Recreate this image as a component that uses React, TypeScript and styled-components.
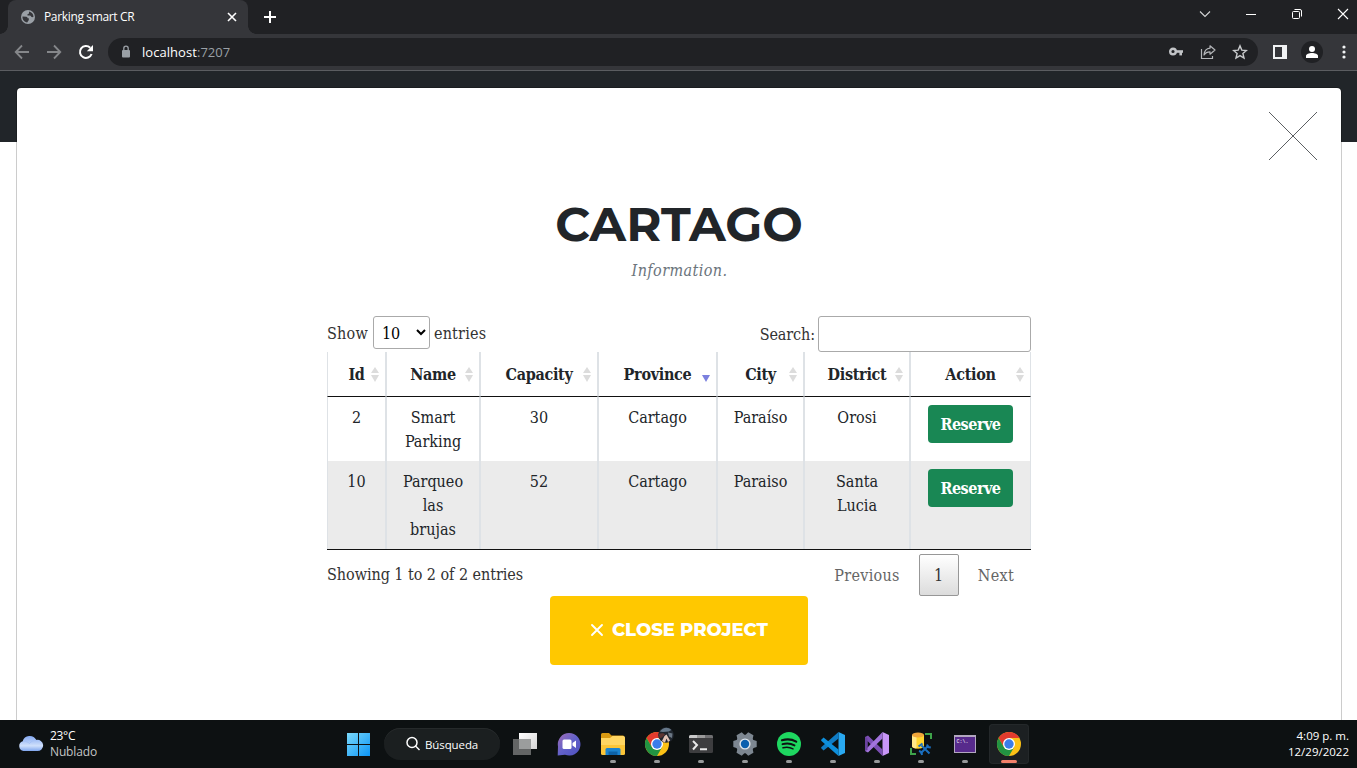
import React from "react";
import styled, { createGlobalStyle } from "styled-components";

const slab = `"Roboto Slab", "DejaVu Serif Condensed", "DejaVu Serif", serif`;
const display = `Montserrat, Inter, "Open Sans", sans-serif`;
const ui = `"Segoe UI", "Open Sans", "Noto Sans", sans-serif`;

const GlobalStyle = createGlobalStyle`
  *, *::before, *::after { box-sizing: border-box; }
  body { margin: 0; background: #fff; overflow: hidden; }
  svg { display: block; flex: none; }
`;

const Screen = styled.div`
  display: flex;
  flex-direction: column;
  width: 1357px;
  height: 768px;
  overflow: hidden;
`;

/* Browser chrome */
const TabStrip = styled.div`
  display: flex;
  align-items: stretch;
  height: 34px;
  padding-left: 8px;
  background: #202124;
`;

const Tab = styled.div`
  position: relative;
  display: flex;
  align-items: center;
  width: 240px;
  padding: 0 10px 0 13px;
  border-radius: 8px 8px 0 0;
  background: #35363a;
  &::before, &::after {
    content: "";
    position: absolute;
    bottom: 0;
    width: 8px;
    height: 8px;
  }
  &::before { left: -8px; background: radial-gradient(circle at 0 0, transparent 7.5px, #35363a 8px); }
  &::after { right: -8px; background: radial-gradient(circle at 100% 0, transparent 7.5px, #35363a 8px); }
`;

const TabTitle = styled.span`
  flex: 1;
  margin-left: 9px;
  color: #fff;
  font: 12px/16px ${ui};
  letter-spacing: -0.35px;
`;

const NewTab = styled.div`
  display: flex;
  align-items: center;
  margin-left: 16px;
`;

const WindowControls = styled.div`
  display: flex;
  align-items: center;
  margin-left: auto;
  height: 28px;
`;

const ControlButton = styled.div`
  display: flex;
  justify-content: center;
  width: 46px;
  &:last-child { margin-right: -9px; }
`;

const Toolbar = styled.div`
  display: flex;
  align-items: center;
  height: 37px;
  padding: 0 11px 0 14px;
  border-bottom: 1px solid #5b5d61;
  background: #35363a;
`;

const NavButtons = styled.div`
  display: flex;
  gap: 16px;
  margin-right: 14px;
`;

const AddressBar = styled.div`
  display: flex;
  align-items: center;
  flex: 1;
  height: 28px;
  padding: 0 10px 0 12px;
  border-radius: 14px;
  background: #202124;
`;

const Url = styled.div`
  flex: 1;
  margin-left: 10px;
  color: #fff;
  font: 13px/18px ${ui};
  letter-spacing: 0.05px;
  span { color: #9aa0a6; }
`;

const AddressActions = styled.div`
  display: flex;
  gap: 16px;
`;

const Avatar = styled.div`
  display: flex;
  align-items: center;
  justify-content: center;
  width: 22px;
  height: 22px;
  margin: 0 19px 0 14px;
  border-radius: 50%;
  background: #202124;
`;

const PanelIcon = styled.div`
  width: 14px;
  height: 14px;
  margin-left: 15px;
  border: 2px solid #f1f3f4;
  border-right-width: 5px;
`;

/* Web page */
const Page = styled.main`
  flex: 1;
  min-height: 0;
  padding: 16px 15px 0 16px;
  overflow: hidden;
  background: linear-gradient(#212529 71px, #fff 71px);
`;

const Modal = styled.section`
  display: flex;
  flex-direction: column;
  align-items: center;
  height: 700px;
  border: 1px solid rgba(0, 0, 0, 0.2);
  border-radius: 5px;
  background: #fff;
  background-clip: padding-box;
`;

const ModalHeader = styled.div`
  display: flex;
  justify-content: flex-end;
  width: 100%;
  height: 106px;
  padding: 24px 24px 0 0;
`;

const Title = styled.h2`
  margin: 0;
  color: #212529;
  font: 700 48px/60px ${display};
  text-transform: uppercase;
`;

const Subtitle = styled.p`
  margin: 5px 0 0;
  height: 57px;
  padding-left: 1px;
  color: #6c757d;
  font: italic 16px/24px ${slab};
  letter-spacing: 0.4px;
`;

const TableWrap = styled.div`
  display: flex;
  flex-direction: column;
  width: 704px;
  color: #333;
  font: 16px/24px ${slab};
`;

const Controls = styled.div`
  display: flex;
  align-items: flex-start;
  justify-content: space-between;
  height: 36px;
`;

const Label = styled.label`
  display: flex;
  align-items: center;
  gap: 4px;
  letter-spacing: 0.2px;
  span { padding-top: 3px; }
`;

const SearchLabel = styled(Label)`
  gap: 3px;
  letter-spacing: -0.1px;
  span { padding-top: 2px; }
`;

const PageSize = styled.select`
  width: 57px;
  height: 33px;
  margin-left: 1px;
  padding: 5px 4px 3px;
  border: 1px solid #aaa;
  border-radius: 3px;
  background: transparent;
  color: #000;
  font: inherit;
`;

const SearchInput = styled.input`
  width: 213px;
  height: 36px;
  padding: 5px;
  border: 1px solid #aaa;
  border-radius: 3px;
  background: transparent;
  font: inherit;
`;

const Table = styled.table`
  width: 704px;
  table-layout: fixed;
  border-collapse: separate;
  border-spacing: 0;
  border-bottom: 1px solid #111;
  color: #212529;
  text-align: center;
`;

const HeadCell = styled.th`
  position: relative;
  height: 45px;
  padding: 11px 0 9px;
  border: solid #dee2e6;
  border-width: 0 1px 1px;
  border-bottom-color: #111;
  font-weight: 700;
  letter-spacing: -0.3px;
`;

const SortMark = styled.span<{ $active?: boolean }>`
  position: absolute;
  top: 15px;
  right: 6px;
  display: flex;
  flex-direction: column;
  gap: 2px;
  &::before, &::after {
    content: "";
    border: solid transparent;
    border-width: 0 4px;
  }
  &::before { border-bottom: 6px solid ${(p) => (p.$active ? "transparent" : "#dcdcdc")}; }
  &::after { border-top: 7px solid ${(p) => (p.$active ? "#7b80de" : "#dcdcdc")}; }
`;

const Row = styled.tr<{ $striped?: boolean }>`
  background: ${(p) => (p.$striped ? "#ebebeb" : "#fff")};
`;

const Cell = styled.td`
  padding: 9px 14px 7px;
  border: solid #dee2e6;
  border-width: 0 1px;
  vertical-align: top;
`;

const ReserveButton = styled.button`
  display: block;
  width: 85px;
  height: 38px;
  margin: -1px auto 0;
  padding: 2px 0 0;
  border: 0;
  border-radius: 4px;
  background: #198754;
  color: #fff;
  font: 700 16px/24px ${slab};
  letter-spacing: -0.5px;
`;

const Footer = styled.div`
  display: flex;
  justify-content: space-between;
  height: 46px;
  padding-top: 4px;
`;

const Info = styled.div`
  padding-top: 9px;
  letter-spacing: -0.05px;
`;

const Pager = styled.div`
  display: flex;
  align-items: flex-start;
`;

const PageLink = styled.div<{ $current?: boolean }>`
  width: ${(p) => (p.$current ? "40px" : "auto")};
  height: 42px;
  padding: ${(p) => (p.$current ? "9px 0" : "9px 16px")};
  margin-left: 2px;
  border: 1px solid ${(p) => (p.$current ? "#979797" : "transparent")};
  border-radius: 2px;
  background: ${(p) => (p.$current ? "linear-gradient(#fff, #dcdcdc)" : "transparent")};
  color: ${(p) => (p.$current ? "#333" : "#666")};
  text-align: center;
  letter-spacing: 0.3px;
`;

const CloseButton = styled.button`
  display: flex;
  align-items: center;
  justify-content: center;
  gap: 8px;
  width: 258px;
  height: 69px;
  padding: 0 0 2px;
  border: 0;
  border-radius: 4px;
  background: #ffc800;
  color: #fff;
  font: 800 18px/24px ${display};
  text-transform: uppercase;
`;

/* Taskbar */
const Taskbar = styled.footer`
  display: grid;
  grid-template-columns: 336px 1fr auto;
  height: 48px;
  background: #0d1112;
  color: #fff;
  font-family: ${ui};
`;

const Weather = styled.div`
  display: flex;
  align-items: center;
  gap: 6px;
  padding-left: 18px;
  font-size: 12px;
  line-height: 16px;
  span { display: block; letter-spacing: -0.3px; }
  span + span { color: #c4c6c6; letter-spacing: -0.15px; }
`;

const Apps = styled.div`
  display: flex;
  align-items: center;
`;

const AppTile = styled.div<{ $active?: boolean }>`
  display: flex;
  align-items: center;
  justify-content: center;
  position: relative;
  width: 40px;
  height: 40px;
  margin: 0 2px;
  border-radius: 4px;
  background: ${(p) => (p.$active ? "#1c2022" : "transparent")};
  box-shadow: ${(p) => (p.$active ? "inset 0 0 0 1px #24282a" : "none")};
`;

const RunMark = styled.i<{ $active?: boolean }>`
  position: absolute;
  bottom: 1px;
  left: 50%;
  width: ${(p) => (p.$active ? 16 : 6)}px;
  height: 3px;
  border-radius: 2px;
  transform: translateX(-50%);
  background: ${(p) => (p.$active ? "#f2806a" : "#96999a")};
`;

const SearchPill = styled.div`
  display: flex;
  align-items: center;
  gap: 4px;
  width: 116px;
  height: 32px;
  margin: 0 3px 0 4px;
  padding-left: 21px;
  border-radius: 16px;
  background: #1b1f20;
  box-shadow: inset 0 1px #262a2b;
  font-size: 11.5px;
  letter-spacing: -0.1px;
`;

const Clock = styled.div`
  padding: 8px 8px 0 0;
  font-size: 11.5px;
  line-height: 16px;
  text-align: right;
`;

const Globe = () => (
  <svg width="14" height="14" viewBox="0 0 14 14">
    <circle cx="7" cy="7" r="7" fill="#9aa0a6" />
    <path d="M8 1.500c2.600.6 4.400 2.600 4.500 5.200-.8.600-1.600.6-2.300 0-.3-1-1-1.200-2-1.200H6.500V4.300L8 3.600zM1.500 6.500l3.800.3c.9.1 1.300.7 1.300 1.500h1.200v1.600L6.200 12.500C3.300 12 1.300 9.800 1.500 6.500z" fill="#35363a" />
  </svg>
);

const Lock = () => (
  <svg width="12" height="14" viewBox="0 0 12 14">
    <rect x="2" y="5" width="8" height="7.500" rx="1" fill="#9aa0a6" />
    <path d="M3.800 5.500V3.400a2.200 2.200 0 0 1 4.400 0v2.100" fill="none" stroke="#9aa0a6" strokeWidth="1.300" />
  </svg>
);

const Back = () => (
  <svg width="16" height="16" viewBox="0 0 16 16" fill="none" stroke="#85878a" strokeWidth="1.800">
    <path d="M15 8H2M8 1.500 1.700 8 8 14.500" />
  </svg>
);

const Forward = () => (
  <svg width="16" height="16" viewBox="0 0 16 16" fill="none" stroke="#85878a" strokeWidth="1.800">
    <path d="M1 8h13M8 1.500 14.300 8 8 14.500" />
  </svg>
);

const Reload = () => (
  <svg width="16" height="16" viewBox="0 0 16 16">
    <path d="M13.600 10a6 6 0 1 1-1.400-6.300" fill="none" stroke="#fff" strokeWidth="2" />
    <path d="M15 1v6.200H8.800z" fill="#fff" />
  </svg>
);

const Key = () => (
  <svg width="16" height="16" viewBox="0 0 16 16" fill="none" stroke="#c2c4c7">
    <circle cx="5" cy="7.500" r="2.800" strokeWidth="2.400" />
    <path d="M8 7.500h7" strokeWidth="2.600" />
    <path d="M12.700 8v3.400" strokeWidth="2.600" />
  </svg>
);

const Share = () => (
  <svg width="16" height="16" viewBox="0 0 16 16" fill="none" stroke="#b4b6b9" strokeWidth="1.200">
    <path d="M1.500 5v9.500h11V12" />
    <path d="M10 1.800 15 6l-5 4.200V7.800C7 7.800 5.300 8.800 4 11c.3-3.800 2.500-6.400 6-6.800z" strokeLinejoin="round" />
  </svg>
);

const Star = () => (
  <svg width="16" height="16" viewBox="0 0 16 16" fill="none" stroke="#c8cacc" strokeWidth="1.400">
    <path d="m8 1.900 1.800 4.200 4.600.4-3.500 3 1.100 4.500L8 11.600 4 14l1.100-4.500-3.500-3 4.600-.4z" />
  </svg>
);

const ChromeLogo = ({ badge }: { badge?: boolean }) => (
  <svg width="28" height="28" viewBox="0 0 28 28" overflow="visible">
    <circle cx="14" cy="14" r="12" fill="#fbc116" />
    <path d="M14 8h10.400A12 12 0 0 0 3.600 8l5.200 9z" fill="#e33b2e" />
    <path d="M3.600 8A12 12 0 0 0 14 26l5.200-9-5.200 3-5.200-3z" fill="#229342" />
    <circle cx="14" cy="14" r="6" fill="#fff" />
    <circle cx="14" cy="14" r="4.700" fill="#3b7de9" />
    {badge && (
      <g>
        <circle cx="23" cy="5" r="7.800" fill="#20262e" />
        <path d="M16.800 1.500c3-4.500 8.500-5 11.500-1.500l-2.500 1.500-6 .5z" fill="#66788a" />
        <path d="M16 4c2-1 5-1 6 .5l-3 3-2.500 1z" fill="#5d3430" />
        <path d="m25 2.500 4.500 1-.5 4.500-3-1.500z" fill="#6b7784" />
        <path d="m19 11 2.500-5 2-1.500 3.500 6-2 1.500-1.500-3.500-1.500 4z" fill="#e3c3b6" />
      </g>
    )}
  </svg>
);

const WindowsLogo = () => (
  <svg width="24" height="24" viewBox="0 0 24 24">
    <defs>
      <linearGradient id="win" x1="0" y1="0" x2="24" y2="24" gradientUnits="userSpaceOnUse">
        <stop stopColor="#7fdcfb" />
        <stop offset="1" stopColor="#0c95f6" />
      </linearGradient>
    </defs>
    <path d="M1 1h11v11H1zM13 1h11v11H13zM1 13h11v11H1zM13 13h11v11H13z" fill="url(#win)" />
  </svg>
);

const TaskView = () => (
  <svg width="24" height="24" viewBox="0 0 24 24">
    <defs>
      <linearGradient id="tv" x1="0" y1="0" x2="1" y2="1">
        <stop stopColor="#fff" />
        <stop offset="1" stopColor="#d4d4d4" />
      </linearGradient>
    </defs>
    <path d="M6 1h18v16H6z" fill="url(#tv)" />
    <path d="M0 7h18v16H0z" fill="#636565" />
    <path d="M6 7h12v10H6z" fill="#9b9d9d" />
  </svg>
);

const Chat = () => (
  <svg width="24" height="24" viewBox="0 0 24 24">
    <defs>
      <linearGradient id="chat" x1="0" y1="0" x2="1" y2="1">
        <stop stopColor="#a06db5" />
        <stop offset=".5" stopColor="#6261c9" />
        <stop offset="1" stopColor="#4d50bf" />
      </linearGradient>
    </defs>
    <path d="M12 1a11.300 11.300 0 1 1-4 21.800L.7 23.500l.3-9A11.300 11.300 0 0 1 12 1z" fill="url(#chat)" />
    <rect x="5.500" y="7.500" width="9" height="9.500" rx="1.500" fill="#fff" />
    <path d="m15.500 11 3.500-2.500v7.500l-3.500-2.500z" fill="#fff" />
  </svg>
);

const Folder = () => (
  <svg width="24" height="24" viewBox="0 0 24 24">
    <path d="M0 2.500A1.500 1.500 0 0 1 1.500 1H8l2.500 2.500H22.500V9H0z" fill="#d99a12" />
    <path d="M0 6h9l2.500-2H22.500A1.500 1.500 0 0 1 24 5.500V22H0z" fill="#ffd662" />
    <path d="M0 13h24v8.500a1.500 1.500 0 0 1-1.500 1.500h-21A1.500 1.500 0 0 1 0 21.500z" fill="#fbc537" />
    <path d="M4.500 23v-5.500A1.500 1.500 0 0 1 6 16h12a1.500 1.500 0 0 1 1.500 1.500V23z" fill="#1a83cf" />
    <path d="M7.500 23v-3.500h9V23z" fill="#0c62a8" />
  </svg>
);

const Terminal = () => (
  <svg width="24" height="20" viewBox="0 0 24 20">
    <rect y="1" width="24" height="18" rx="1.500" fill="#3d3d3f" />
    <path d="M0 4V2.500A1.500 1.500 0 0 1 1.500 1H8v3z" fill="#c9c9c9" />
    <path d="M8 1h8v3H8z" fill="#9a9a9a" />
    <path d="M16 1h6.500A1.500 1.500 0 0 1 24 2.500V4h-8z" fill="#707072" />
    <path d="m4 7 4 4-4 4.500M11 15.200h7" fill="none" stroke="#e9e9e9" strokeWidth="2" />
  </svg>
);

const Gear = () => (
  <svg width="24" height="24" viewBox="0 0 24 24">
    <g fill="#7d8791">
      <circle cx="12" cy="12" r="9.300" />
      {[30, 90, 150, 210, 270, 330].map((a) => (
        <path key={a} d="M7.500 5 9 .300h6L16.500 5z" transform={`rotate(${a} 12 12)`} />
      ))}
    </g>
    <circle cx="12" cy="12" r="5.600" fill="#dfe5ea" />
    <circle cx="12" cy="12" r="4.200" fill="#0c60ae" />
  </svg>
);

const Spotify = () => (
  <svg width="24" height="24" viewBox="0 0 24 24">
    <circle cx="12" cy="12" r="12" fill="#1ed760" />
    <g fill="none" stroke="#0d1112" strokeLinecap="round">
      <path d="M5 8.300c5-1.400 10-1 14.200 1.300" strokeWidth="2.200" />
      <path d="M5.500 12.200c4.200-1.200 8.400-.8 12 1.200" strokeWidth="1.900" />
      <path d="M6 15.800c3.500-.9 6.900-.6 10 1.100" strokeWidth="1.500" />
    </g>
  </svg>
);

const VsCode = () => (
  <svg width="24" height="24" viewBox="0 0 24 24">
    <path d="M17.500 0 24 3v18l-6.500 3z" fill="#29a9f1" />
    <path d="M17.500 0v6.500L2.600 18.400.2 16.300v-1z" fill="#0f7cc5" />
    <path d="M17.500 24v-6.500L2.600 5.600.2 7.700v1z" fill="#0d8fdc" />
  </svg>
);

const VisualStudio = () => (
  <svg width="24" height="24" viewBox="0 0 24 24">
    <path d="M17.500 0 24 3v18l-6.500 3z" fill="#c896f7" />
    <path d="M0 5 3 3.500l14.500 14V24L2.500 9v6.500L0 18z" fill="#7b4fb4" />
    <path d="M17.500 0v6.500L3 20.500 0 19v-2l2.500-1.500z" fill="#a274dc" />
    <path d="M0 5 2.500 6v12L0 19z" fill="#6b43a0" />
  </svg>
);

const DataStudio = () => (
  <svg width="24" height="24" viewBox="0 0 24 24">
    <path d="M16 2h6v5M2 16v6h5" fill="none" stroke="#3ea34a" strokeWidth="2" />
    <path d="M3 3v11c0 3.500 12 3.500 12 0V3z" fill="#ffd52e" />
    <path d="M3 3v11c0 1.500 2 2.300 4.500 2.500V3z" fill="#ffe989" />
    <ellipse cx="9" cy="3" rx="6" ry="2.500" fill="#f0a63a" />
    <g stroke="#1a6fc0" fill="none" strokeWidth="2">
      <path d="m11.500 21.500 8-8M12.500 13.500l8 8" />
      <path d="m9.500 14.500 4-3M18 12.500l1 2.500 2.800.5M10 19l2.500 1 .5 3" />
    </g>
  </svg>
);

const Prompt = () => (
  <svg width="22" height="18" viewBox="0 0 22 18">
    <rect width="22" height="18" fill="#b2a7bf" />
    <rect x="1" y="2" width="20" height="15" fill="#572a8c" />
    <text x="2.500" y="8" fill="#fff" fontSize="5" fontFamily="Liberation Mono, monospace">C:\.</text>
  </svg>
);

const Cloud = () => (
  <svg width="26" height="18" viewBox="0 0 26 18">
    <defs>
      <linearGradient id="cloud" x1="0" y1="0" x2="0" y2="1">
        <stop stopColor="#85aaf2" />
        <stop offset=".65" stopColor="#cfe0fb" />
        <stop offset="1" stopColor="#7fa6ee" />
      </linearGradient>
    </defs>
    <path d="M5.500 16a5 5 0 0 1-.8-9.700A7.300 7.300 0 0 1 18.200 5 5.600 5.600 0 1 1 19 16z" fill="url(#cloud)" />
    <path d="M5 6.200c3-.2 5 .8 6.500 2.300 1.500-2 4-3.500 6.700-3.500" fill="none" stroke="#a6c2f6" />
  </svg>
);

const apps = [Folder, () => <ChromeLogo badge />, Terminal, Gear, Spotify, VsCode, VisualStudio, DataStudio, Prompt];

const columns = [
  { name: "Id", width: 59 },
  { name: "Name", width: 94 },
  { name: "Capacity", width: 118 },
  { name: "Province", width: 119 },
  { name: "City", width: 87 },
  { name: "District", width: 106 },
  { name: "Action", width: 121 },
];

const lots = [
  ["2", "Smart Parking", "30", "Cartago", "Paraíso", "Orosi"],
  ["10", "Parqueo las brujas", "52", "Cartago", "Paraiso", "Santa Lucia"],
];

export default function App() {
  return (
    <Screen>
      <GlobalStyle />
      <TabStrip>
        <Tab>
          <Globe />
          <TabTitle>Parking smart CR</TabTitle>
          <svg width="12" height="12" viewBox="0 0 12 12" stroke="#fff" strokeWidth="1.600">
            <path d="m2 2 8 8M10 2l-8 8" />
          </svg>
        </Tab>
        <NewTab>
          <svg width="12" height="12" viewBox="0 0 12 12" stroke="#fff" strokeWidth="2">
            <path d="M6 0v12M0 6h12" />
          </svg>
        </NewTab>
        <WindowControls>
          <ControlButton>
            <svg width="12" height="12" viewBox="0 0 12 12" fill="none" stroke="#d5d6d7" strokeWidth="1.100">
              <path d="m1 3.500 5 5 5-5" />
            </svg>
          </ControlButton>
          <ControlButton>
            <svg width="10" height="12" viewBox="0 0 10 12" stroke="#fff">
              <path d="M0 6.500h10" />
            </svg>
          </ControlButton>
          <ControlButton>
            <svg width="12" height="12" viewBox="0 0 12 12" fill="none" stroke="#fff">
              <rect x="1.500" y="3.500" width="7" height="7" rx="1" />
              <path d="M3.500 1.500H9a1.500 1.500 0 0 1 1.500 1.500v5.500" />
            </svg>
          </ControlButton>
          <ControlButton>
            <svg width="12" height="12" viewBox="0 0 12 12" stroke="#fff" strokeWidth="1.100">
              <path d="m1 1 10 10M11 1 1 11" />
            </svg>
          </ControlButton>
        </WindowControls>
      </TabStrip>
      <Toolbar>
        <NavButtons>
          <Back />
          <Forward />
          <Reload />
        </NavButtons>
        <AddressBar>
          <Lock />
          <Url>
            localhost<span>:7207</span>
          </Url>
          <AddressActions>
            <Key />
            <Share />
            <Star />
          </AddressActions>
        </AddressBar>
        <PanelIcon />
        <Avatar>
          <svg width="12" height="12" viewBox="0 0 12 12" fill="#fff">
            <circle cx="6" cy="3" r="3" />
            <path d="M0 12v-2c0-2 3-3 6-3s6 1 6 3v2z" />
          </svg>
        </Avatar>
        <svg width="4" height="14" viewBox="0 0 4 14" fill="#f1f3f4">
          <circle cx="2" cy="2" r="1.600" />
          <circle cx="2" cy="7" r="1.600" />
          <circle cx="2" cy="12" r="1.600" />
        </svg>
      </Toolbar>

      <Page>
        <Modal>
          <ModalHeader>
            <svg width="48" height="48" viewBox="0 0 48 48" stroke="#4a4d50" strokeWidth="0.900">
              <path d="m0 0 48 48M48 0 0 48" />
            </svg>
          </ModalHeader>
          <Title>Cartago</Title>
          <Subtitle>Information.</Subtitle>
          <TableWrap>
            <Controls>
              <Label>
                <span>Show</span>
                <PageSize defaultValue="10">
                  <option>10</option>
                </PageSize>
                <span>entries</span>
              </Label>
              <SearchLabel>
                <span>Search:</span>
                <SearchInput />
              </SearchLabel>
            </Controls>
            <Table>
              <colgroup>
                {columns.map((c) => (
                  <col key={c.name} width={c.width} />
                ))}
              </colgroup>
              <thead>
                <tr>
                  {columns.map((c) => (
                    <HeadCell key={c.name}>
                      {c.name}
                      <SortMark $active={c.name === "Province"} />
                    </HeadCell>
                  ))}
                </tr>
              </thead>
              <tbody>
                {lots.map((lot, i) => (
                  <Row key={lot[0]} $striped={i % 2 === 1}>
                    {lot.map((value, j) => (
                      <Cell key={j}>{value}</Cell>
                    ))}
                    <Cell>
                      <ReserveButton>Reserve</ReserveButton>
                    </Cell>
                  </Row>
                ))}
              </tbody>
            </Table>
            <Footer>
              <Info>Showing 1 to 2 of 2 entries</Info>
              <Pager>
                <PageLink>Previous</PageLink>
                <PageLink $current>1</PageLink>
                <PageLink>Next</PageLink>
              </Pager>
            </Footer>
          </TableWrap>
          <CloseButton>
            <svg width="14" height="14" viewBox="0 0 14 14" stroke="#fff" strokeWidth="1.900" strokeLinecap="round">
              <path d="m2 2 10 10M12 2 2 12" />
            </svg>
            Close Project
          </CloseButton>
        </Modal>
      </Page>

      <Taskbar>
        <Weather>
          <Cloud />
          <div>
            <span>23°C</span>
            <span>Nublado</span>
          </div>
        </Weather>
        <Apps>
          <AppTile>
            <WindowsLogo />
          </AppTile>
          <SearchPill>
            <svg width="16" height="16" viewBox="0 0 16 16" fill="none" stroke="#fff" strokeWidth="1.500">
              <circle cx="7" cy="6.500" r="5" />
              <path d="m10.500 10 4 4" />
            </svg>
            Búsqueda
          </SearchPill>
          <AppTile>
            <TaskView />
          </AppTile>
          <AppTile>
            <Chat />
          </AppTile>
          {apps.map((Icon, i) => (
            <AppTile key={i}>
              <Icon />
              <RunMark />
            </AppTile>
          ))}
          <AppTile $active>
            <ChromeLogo />
            <RunMark $active />
          </AppTile>
        </Apps>
        <Clock>
          4:09 p. m.
          <br />
          12/29/2022
        </Clock>
      </Taskbar>
    </Screen>
  );
}
